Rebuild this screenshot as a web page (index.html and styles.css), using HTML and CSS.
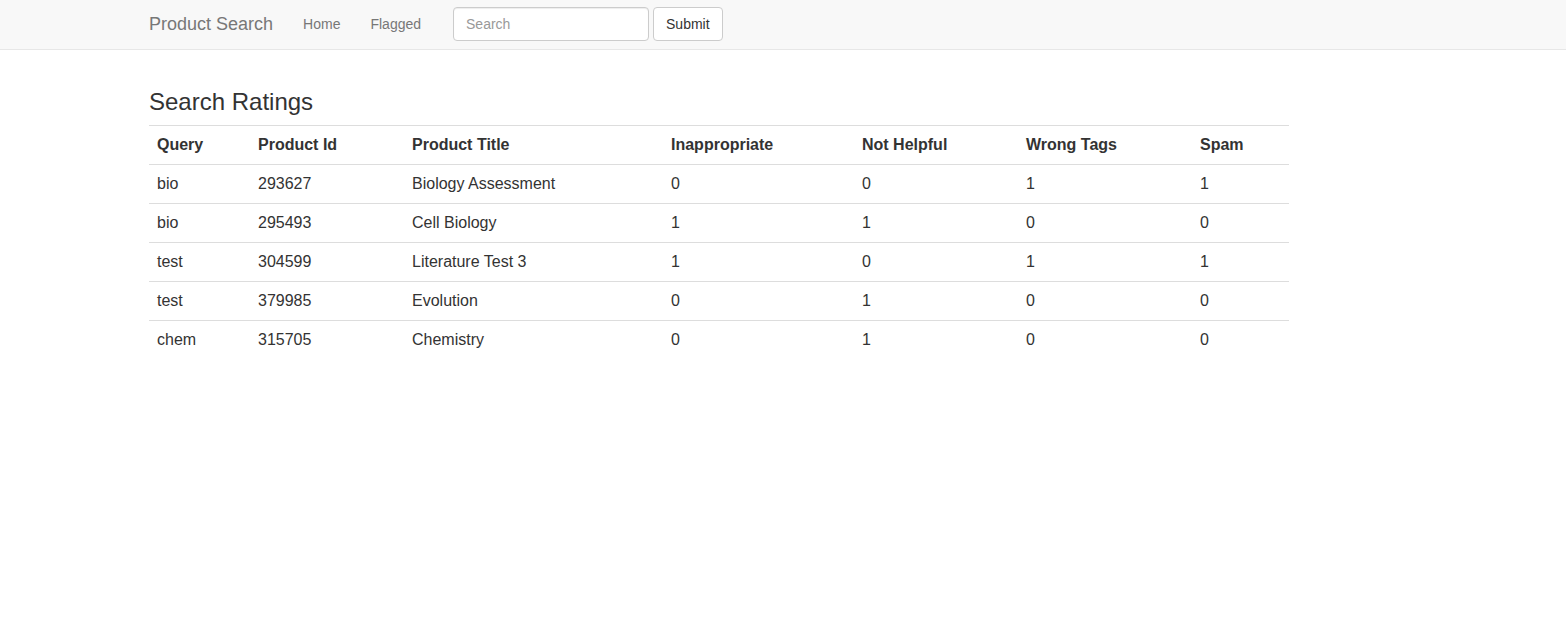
FILE: index.html
```html
<!DOCTYPE html>
<html>
<head>
<meta charset="utf-8">
<title>Product Search</title>
<link rel="stylesheet" href="styles.css">
</head>
<body>
<nav class="navbar">
  <div class="container navbar-inner">
    <a class="brand" href="#">Product Search</a>
    <a class="nav-link" href="#">Home</a>
    <a class="nav-link" href="#">Flagged</a>
    <form class="nav-form">
      <input class="search-input" type="text" placeholder="Search">
      <button class="btn" type="button">Submit</button>
    </form>
  </div>
</nav>
<main class="container">
  <h3 class="title">Search Ratings</h3>
  <table class="ratings">
    <colgroup>
      <col class="c1"><col class="c2"><col class="c3"><col class="c4"><col class="c5"><col class="c6"><col class="c7">
    </colgroup>
    <tbody>
      <tr class="head"><th>Query</th><th>Product Id</th><th>Product Title</th><th>Inappropriate</th><th>Not Helpful</th><th>Wrong Tags</th><th>Spam</th></tr>
      <tr><td>bio</td><td>293627</td><td>Biology Assessment</td><td>0</td><td>0</td><td>1</td><td>1</td></tr>
      <tr><td>bio</td><td>295493</td><td>Cell Biology</td><td>1</td><td>1</td><td>0</td><td>0</td></tr>
      <tr><td>test</td><td>304599</td><td>Literature Test 3</td><td>1</td><td>0</td><td>1</td><td>1</td></tr>
      <tr><td>test</td><td>379985</td><td>Evolution</td><td>0</td><td>1</td><td>0</td><td>0</td></tr>
      <tr><td>chem</td><td>315705</td><td>Chemistry</td><td>0</td><td>1</td><td>0</td><td>0</td></tr>
    </tbody>
  </table>
</main>
</body>
</html>
```

FILE: styles.css
```css
* { box-sizing: border-box; }
html, body { margin: 0; padding: 0; }
body {
  font-family: "Liberation Sans", Arial, sans-serif;
  font-size: 14px;
  line-height: 1.42857;
  color: #333;
  background: #fff;
}
.container {
  width: 1170px;
  margin-left: 134px;
  padding: 0 15px;
}
.navbar {
  background: #f8f8f8;
  border-bottom: 1px solid #e7e7e7;
  height: 50px;
}
.navbar-inner {
  display: flex;
  align-items: flex-start;
  height: 49px;
}
.brand {
  font-size: 18px;
  line-height: 20px;
  color: #777;
  text-decoration: none;
  padding: 14px 15px 15px 0;
}
.nav-link {
  font-size: 14px;
  line-height: 20px;
  color: #777;
  text-decoration: none;
  padding: 14px 15px 15px;
}
.nav-form {
  display: flex;
  align-items: center;
  gap: 4px;
  margin: 7px 0 0;
  padding: 0 15px 0 17px;
}
.search-input {
  width: 196px;
  height: 34px;
  padding: 6px 12px;
  font-family: inherit;
  font-size: 14px;
  color: #555;
  background: #fff;
  border: 1px solid #ccc;
  border-radius: 4px;
  box-shadow: inset 0 1px 1px rgba(0,0,0,0.075);
  outline: none;
}
.search-input::placeholder { color: #999; }
.btn {
  height: 34px;
  padding: 6px 12px;
  font-family: inherit;
  font-size: 14px;
  line-height: 20px;
  color: #333;
  background: #fff;
  border: 1px solid #ccc;
  border-radius: 4px;
}
.title {
  font-size: 24px;
  font-weight: 500;
  line-height: 26px;
  margin: 39px 0 10px;
}
.ratings {
  width: 1140px;
  table-layout: fixed;
  border-collapse: collapse;
  border-spacing: 0;
  font-size: 16px;
}
.c1 { width: 101px; }
.c2 { width: 154px; }
.c3 { width: 259px; }
.c4 { width: 191px; }
.c5 { width: 164px; }
.c6 { width: 174px; }
.c7 { width: 97px; }
.ratings th, .ratings td {
  text-align: left;
  padding: 8px;
  line-height: 22px;
  border-top: 1px solid #ddd;
  vertical-align: top;
}
.ratings th { font-weight: bold; }
```
